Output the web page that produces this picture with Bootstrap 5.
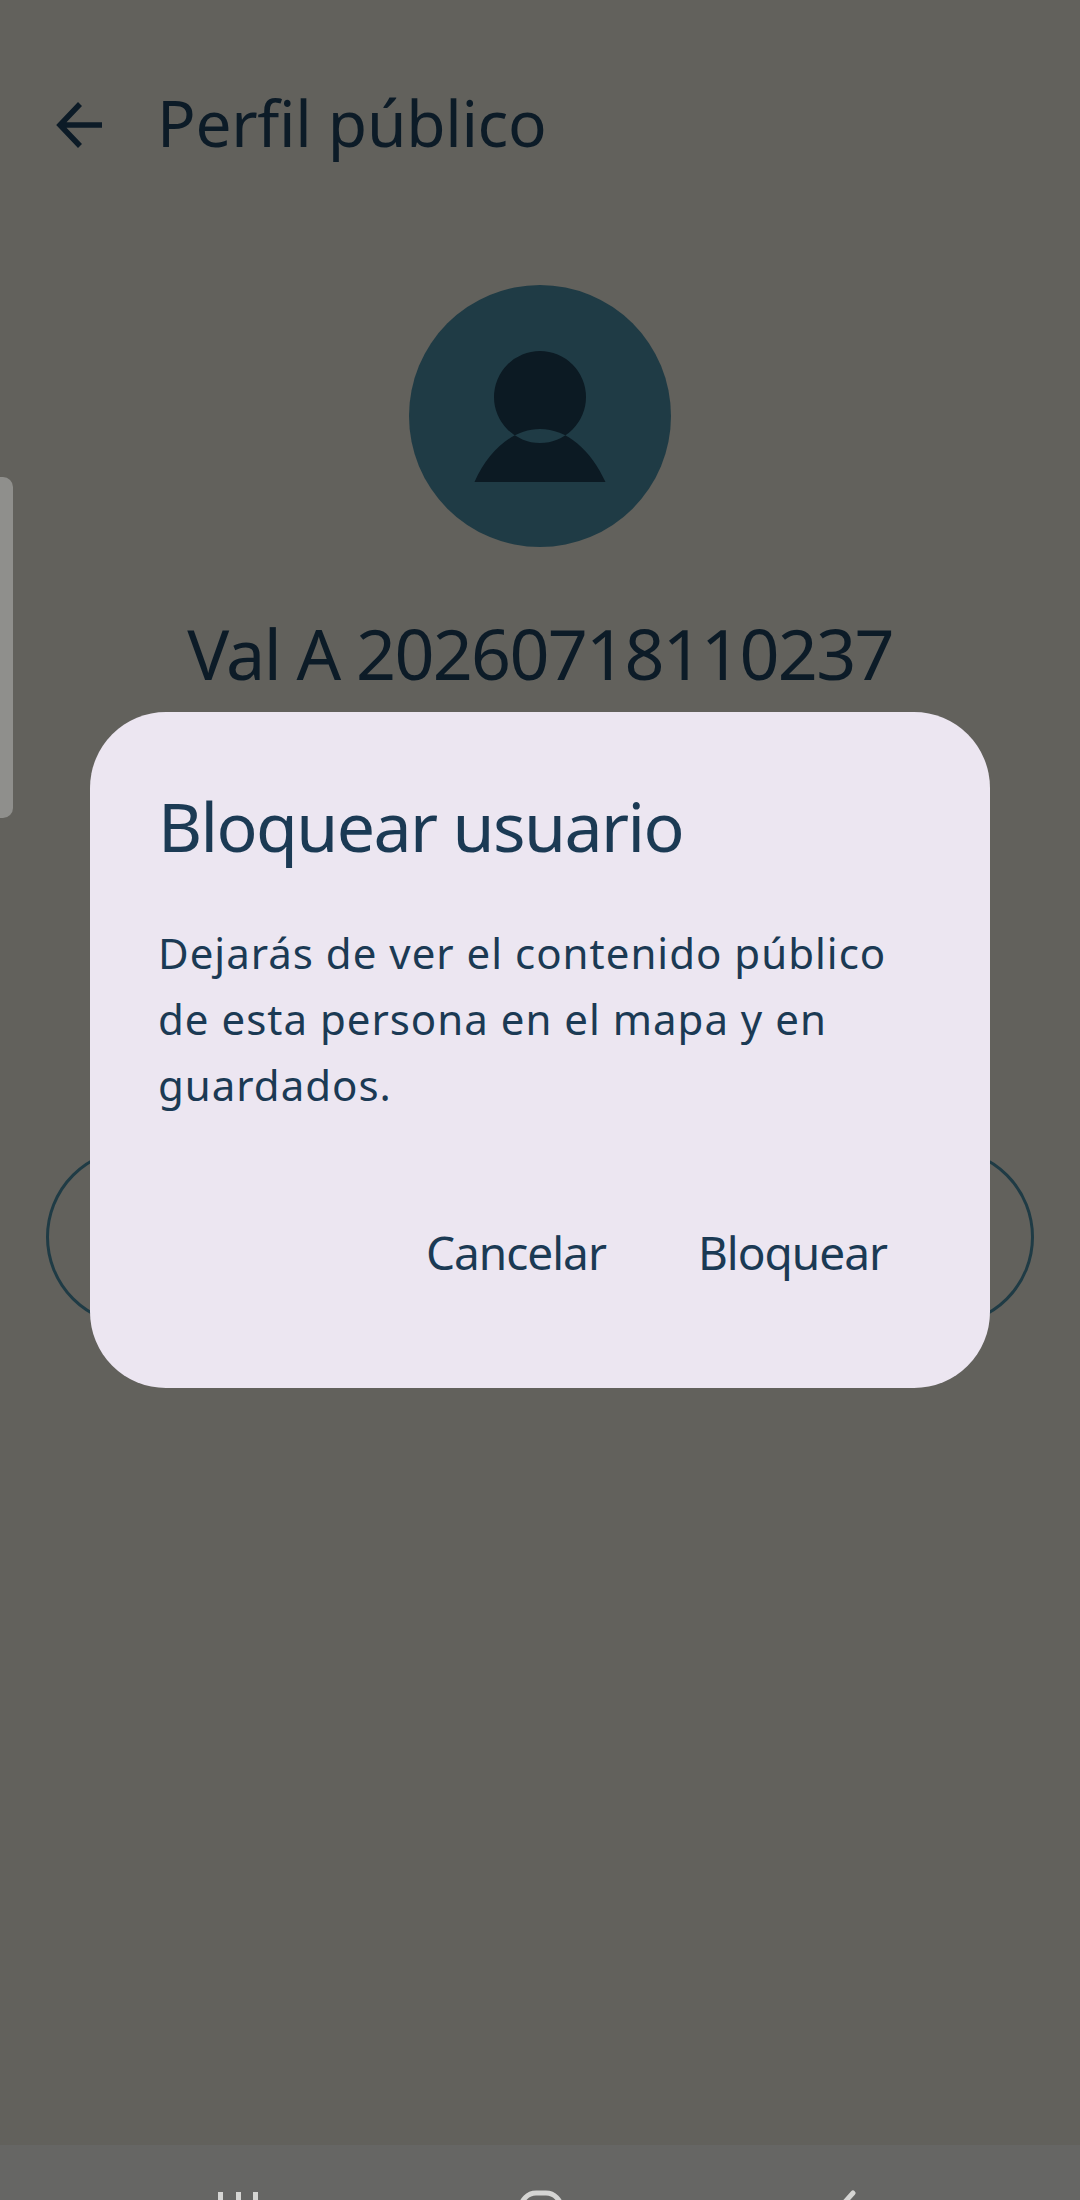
<!DOCTYPE html>
<html lang="es">
<head>
<meta charset="UTF-8">
<meta name="viewport" content="width=device-width, initial-scale=1.0">
<title>Perfil público</title>
<link rel="stylesheet" href="https://cdn.jsdelivr.net/npm/bootstrap@5.3.2/dist/css/bootstrap.min.css">
<style>
    html, body { margin: 0; background: #62615c; }
    body { font-family: "Noto Sans", "Liberation Sans", sans-serif; }
    .screen { width: 1080px; height: 2200px; background: #62615c; overflow: hidden; }
    .top-bar { height: 245px; padding-left: 56px; padding-top: 88px; align-items: flex-start; color: #0c1b27; }
    .top-bar h1 { font-size: 64px; font-weight: 400; line-height: 70px; letter-spacing: -.3px; margin: 0 0 0 53px; color: #0c1b27; }
    .back-icon { margin-top: 14px; }
    .avatar { width: 262px; height: 262px; margin-top: 40px; }
    .name { font-size: 70px; font-weight: 400; line-height: 80px; letter-spacing: -1.7px; margin-top: 66px; color: #0c1b27; }
    .outline-pill { height: 178px; margin: 455px 46px 0; border: 3px solid #1f3b45; border-radius: 89px; }
    .side-handle { left: 0; top: 477px; width: 13px; height: 341px; background: #8f8f8c; border-radius: 0 10px 10px 0; }
    .dialog { left: 90px; top: 712px; width: 900px; height: 676px; background: #ece6f1; border: 0; border-radius: 76px; padding: 76px 68px 0; color: #1b3a54; }
    .dialog h2 { font-size: 68px; font-weight: 400; line-height: 76px; letter-spacing: -1.6px; margin: 0; color: #1b3a54; }
    .dialog p { font-size: 42px; font-weight: 400; line-height: 66px; letter-spacing: 1px; margin: 56px 0 0; }
    .dialog-actions { gap: 92px; margin-top: 104px; padding-right: 35px; }
    .dialog-actions .btn { font-size: 46px; font-weight: 400; line-height: 60px; letter-spacing: -1px; padding: 0; border: 0; color: #1b3a54; }
    .sys-nav { height: 55px; background: #666664; overflow: hidden; position: relative; }
    .sys-nav svg { position: absolute; top: 45px; }
</style>
</head>
<body>
<div class="screen position-relative d-flex flex-column">

    <div class="top-bar d-flex">
        <svg class="back-icon" width="48" height="46" viewBox="0 0 48 46" fill="none" stroke="#0c1b27" stroke-width="5.5">
            <path d="M46 23H5M24 2L4 23l20 21"/>
        </svg>
        <h1>Perfil público</h1>
    </div>

    <svg class="avatar d-block mx-auto" viewBox="0 0 262 262">
        <circle cx="131" cy="131" r="131" fill="#1f3b45"/>
        <path fill="#0c1a23" fill-rule="evenodd" d="M131 66a46 46 0 1 0 0 92a46 46 0 1 0 0-92zM65.500 197C80 165 104 144 131 144s51 21 65.500 53z"/>
    </svg>

    <div class="name text-center">Val A 20260718110237</div>

    <div class="outline-pill"></div>

    <div class="sys-nav mt-auto">
        <svg style="left:218px" width="40" height="40" fill="#d5d5d3"><path d="M0 2h5v40H0zM18 2h5v40h-5zM35 2h5v40h-5z"/></svg>
        <svg style="left:518px" width="46" height="40" fill="none" stroke="#d5d5d3" stroke-width="5"><rect x="3" y="3" width="40" height="40" rx="15"/></svg>
        <svg style="left:833px" width="24" height="40" fill="none" stroke="#d5d5d3" stroke-width="5" stroke-linecap="round"><path d="M20 3L2 23l18 20"/></svg>
    </div>

    <div class="side-handle position-absolute"></div>

    <div class="dialog card position-absolute">
        <h2>Bloquear usuario</h2>
        <p>Dejarás de ver el contenido público<br>de esta persona en el mapa y en<br>guardados.</p>
        <div class="dialog-actions d-flex justify-content-end">
            <button type="button" class="btn">Cancelar</button>
            <button type="button" class="btn">Bloquear</button>
        </div>
    </div>
</div>
<script src="https://cdn.jsdelivr.net/npm/bootstrap@5.3.2/dist/js/bootstrap.bundle.min.js"></script>
</body>
</html>
